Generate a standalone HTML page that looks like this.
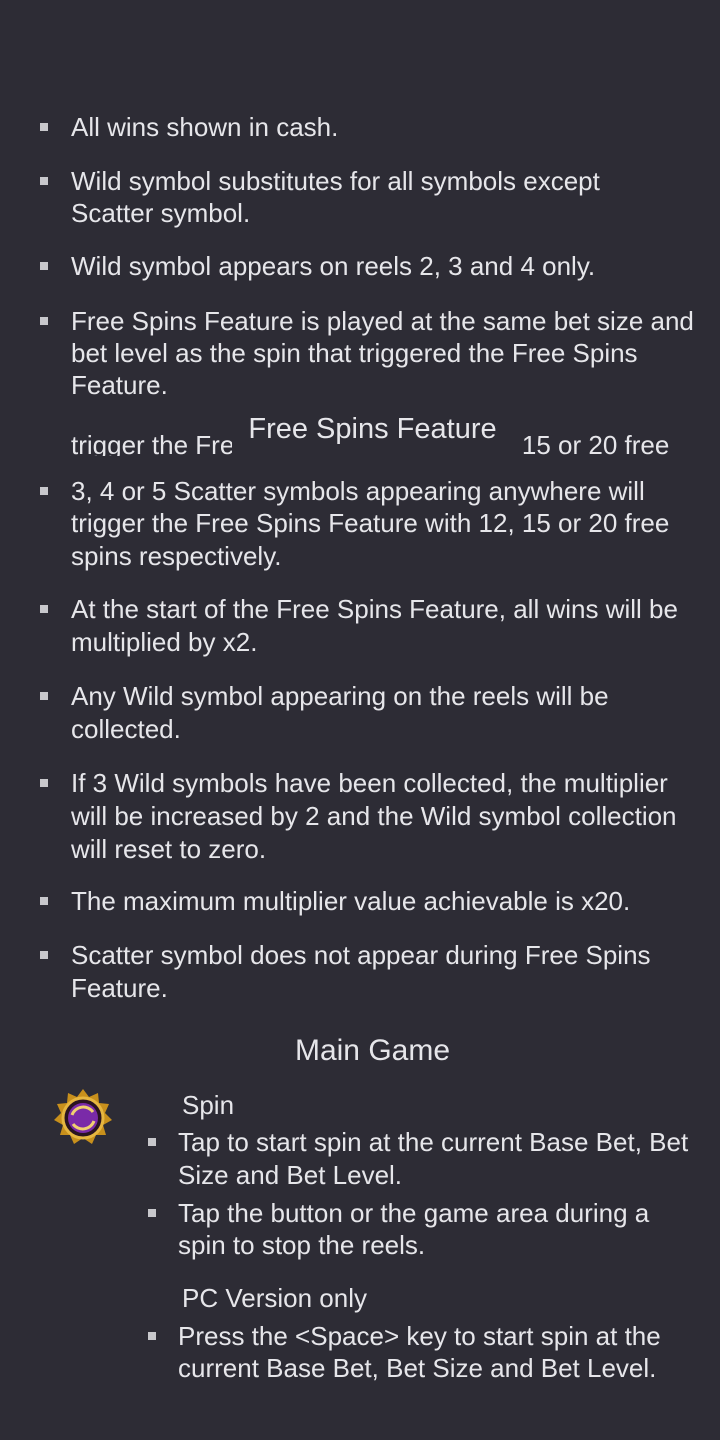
<!DOCTYPE html>
<html><head><meta charset="utf-8"><style>
body{margin:0;width:720px;height:1440px;background:#2d2c35;overflow:hidden;position:relative;font-family:"Liberation Sans",sans-serif;color:#e6e6ea;}
.l{position:absolute;font-size:26px;line-height:30px;white-space:nowrap;}
.b{position:absolute;width:8px;height:8px;background:#c8c8cc;}
</style></head><body>
<div class="b" style="left:40px;top:123px"></div><div class="l" style="left:71px;top:112px">All wins shown in cash.</div>
<div class="b" style="left:40px;top:177px"></div><div class="l" style="left:71px;top:166px">Wild symbol substitutes for all symbols except</div>
<div class="l" style="left:71px;top:198px">Scatter symbol.</div>
<div class="b" style="left:40px;top:262px"></div><div class="l" style="left:71px;top:251px">Wild symbol appears on reels 2, 3 and 4 only.</div>
<div class="b" style="left:40px;top:317px"></div><div class="l" style="left:71px;top:306px">Free Spins Feature is played at the same bet size and</div>
<div class="l" style="left:71px;top:338px">bet level as the spin that triggered the Free Spins</div>
<div class="l" style="left:71px;top:370px">Feature.</div>
<div style="position:absolute;left:0;top:420px;width:720px;height:36px;overflow:hidden">
<div class="l" style="left:71px;top:10px">trigger the Free Spins Feature with 12, 15 or 20 free</div>
</div>
<div style="position:absolute;left:232px;top:400px;width:282px;height:58px;background:#2d2c35"></div>
<div class="l" style="left:0;width:745px;text-align:center;top:414px;font-size:29px">Free Spins Feature</div>
<div class="b" style="left:40px;top:487px"></div><div class="l" style="left:71px;top:476px">3, 4 or 5 Scatter symbols appearing anywhere will</div>
<div class="l" style="left:71px;top:508px">trigger the Free Spins Feature with 12, 15 or 20 free</div>
<div class="l" style="left:71px;top:541px">spins respectively.</div>
<div class="b" style="left:40px;top:605px"></div><div class="l" style="left:71px;top:594px">At the start of the Free Spins Feature, all wins will be</div>
<div class="l" style="left:71px;top:627px">multiplied by x2.</div>
<div class="b" style="left:40px;top:692px"></div><div class="l" style="left:71px;top:681px">Any Wild symbol appearing on the reels will be</div>
<div class="l" style="left:71px;top:714px">collected.</div>
<div class="b" style="left:40px;top:779px"></div><div class="l" style="left:71px;top:768px">If 3 Wild symbols have been collected, the multiplier</div>
<div class="l" style="left:71px;top:801px">will be increased by 2 and the Wild symbol collection</div>
<div class="l" style="left:71px;top:834px">will reset to zero.</div>
<div class="b" style="left:40px;top:897px"></div><div class="l" style="left:71px;top:886px">The maximum multiplier value achievable is x20.</div>
<div class="b" style="left:40px;top:951px"></div><div class="l" style="left:71px;top:940px">Scatter symbol does not appear during Free Spins</div>
<div class="l" style="left:71px;top:973px">Feature.</div>
<div class="l" style="left:0;width:745px;text-align:center;top:1036px;font-size:30px">Main Game</div>
<svg style="position:absolute;left:52px;top:1087px" width="62" height="62" viewBox="0 0 62 62">
<polygon points="31,2 37,10 46,6 47,16 57,17 53,26 60,33 51,38 54,48 44,48 40,57 31,51 22,57 18,48 8,48 11,38 2,33 9,26 5,17 15,16 16,6 25,10" fill="#c8901c"/>
<circle cx="31" cy="31" r="20" fill="#2a1420" stroke="#e6b640" stroke-width="3"/>
<circle cx="31" cy="31" r="15" fill="#7a2aa8"/>
<path d="M20 28 A12 12 0 0 1 41 25 M42 34 A12 12 0 0 1 21 37" fill="none" stroke="#f0d070" stroke-width="3"/>
</svg>
<div class="l" style="left:182px;top:1090px">Spin</div>
<div class="b" style="left:148px;top:1138px"></div><div class="l" style="left:178px;top:1127px">Tap to start spin at the current Base Bet, Bet</div>
<div class="l" style="left:178px;top:1160px">Size and Bet Level.</div>
<div class="b" style="left:148px;top:1209px"></div><div class="l" style="left:178px;top:1198px">Tap the button or the game area during a</div>
<div class="l" style="left:178px;top:1230px">spin to stop the reels.</div>
<div class="l" style="left:182px;top:1283px">PC Version only</div>
<div class="b" style="left:148px;top:1332px"></div><div class="l" style="left:178px;top:1321px">Press the &lt;Space&gt; key to start spin at the</div>
<div class="l" style="left:178px;top:1353px">current Base Bet, Bet Size and Bet Level.</div>
</body></html>
